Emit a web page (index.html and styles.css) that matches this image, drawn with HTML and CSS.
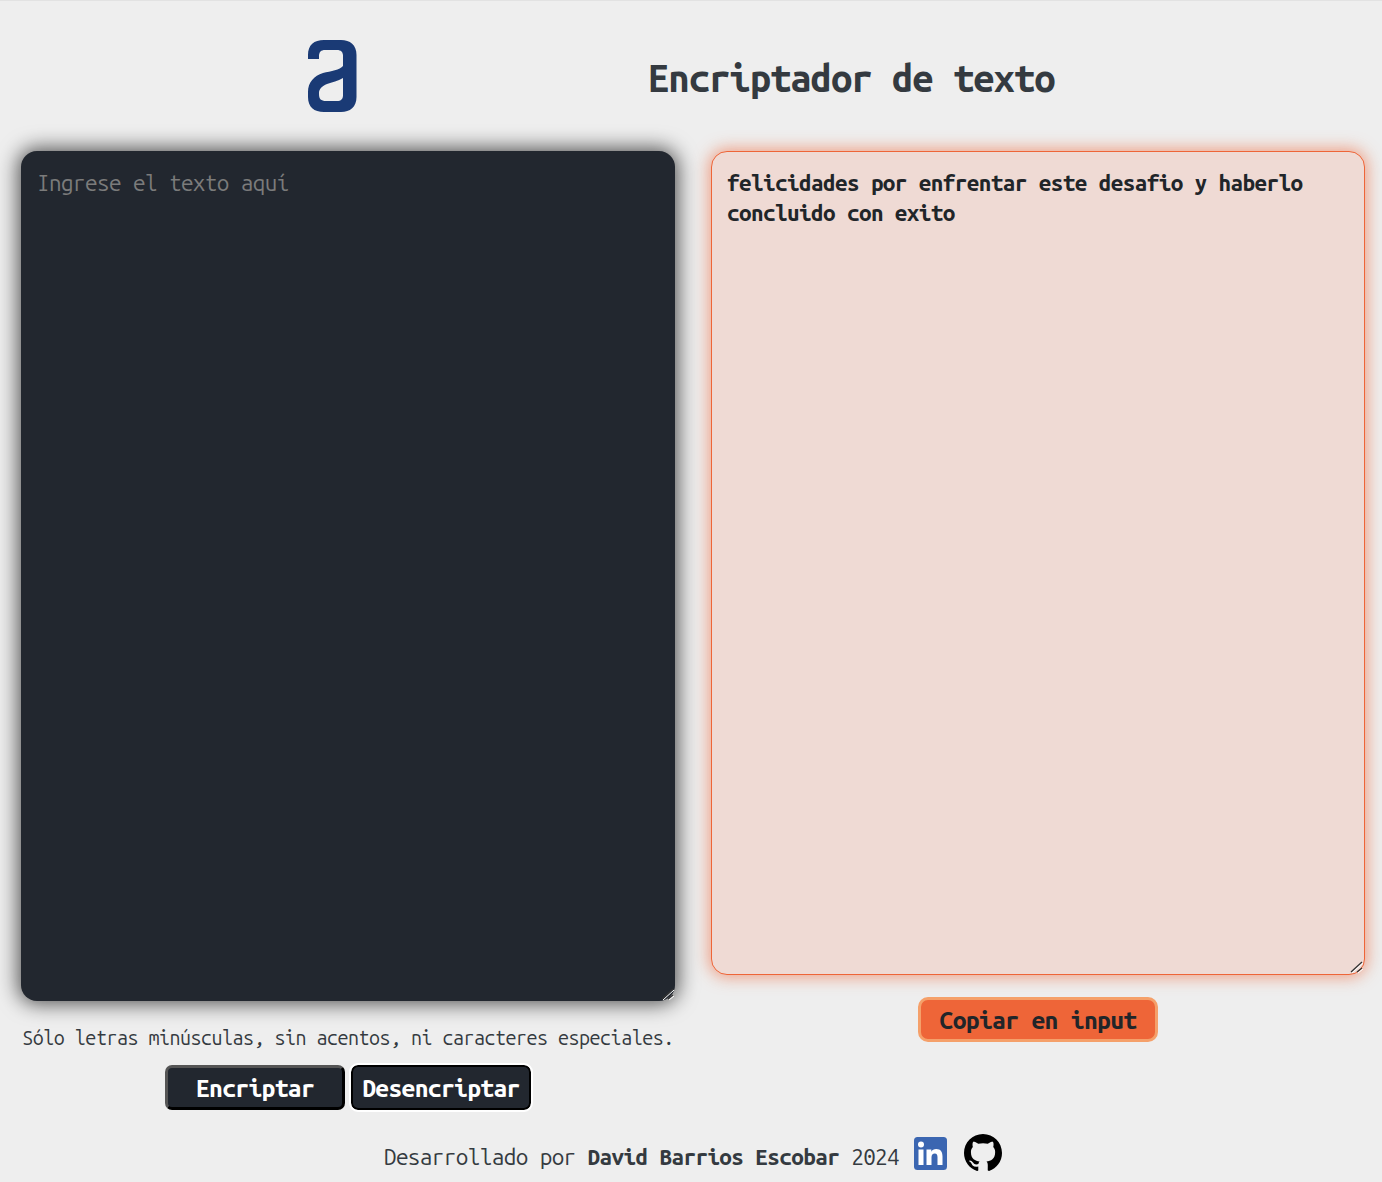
FILE: index.html
```html
<!DOCTYPE html>
<html lang="es">
<head>
<meta charset="utf-8">
<title>Encriptador de texto</title>
<link rel="stylesheet" href="styles.css">
</head>
<body>
<header class="header">
  <svg class="logo" viewBox="0 0 49 72" width="49" height="72" aria-label="Logo"><path fill-rule="evenodd" fill="#1a3a75" d="M0 19V15C0 5 6 0 16 0H33C42 0 48.500 5 48.500 15V57C48.500 67 42 72 33 72H16C6 72 0 67 0 57V52C0 42 6 36 15 33C23 31 32 30 35 26V16C35 12 33 10 29 10H17C13 10 11 12 11 16V19ZM35 38C30 41 24 42 19 44C14 46 11 49 11 53V54C11 59 13 61 18 61H29C33 61 35 59 35 55Z"/></svg>
  <h1 class="title">Encriptador de texto</h1>
</header>
<main class="columns">
  <section class="col">
    <textarea class="input" placeholder="Ingrese el texto aquí"></textarea>
    <p class="hint">Sólo letras minúsculas, sin acentos, ni caracteres especiales.</p>
    <div class="actions">
      <button class="btn">Encriptar</button>
      <button class="btn btn-active">Desencriptar</button>
    </div>
  </section>
  <section class="col">
    <textarea class="output">felicidades por enfrentar este desafio y haberlo concluido con exito</textarea>
    <button class="copy">Copiar en input</button>
  </section>
</main>
<footer class="footer">
  <span class="credit">Desarrollado por <b>David Barrios Escobar</b> 2024</span>
  <svg class="linkedin" viewBox="0 0 33 33" width="33" height="33" aria-label="LinkedIn"><rect width="33" height="33" rx="3.5" fill="#3b66b1"/><rect x="4.5" y="12.500" width="5" height="15.500" fill="#fff"/><circle cx="7" cy="7.600" r="3" fill="#fff"/><path fill="#fff" d="M12.500 12.500h4.800v2.200c.9-1.600 2.600-2.600 4.900-2.600 4.400 0 6.300 2.700 6.300 7.400V28h-5v-7.700c0-2.400-.7-3.900-2.700-3.900-2.200 0-3.300 1.500-3.300 3.900V28h-5z"/></svg>
  <svg class="github" viewBox="0 0 16 16" width="38" height="38" aria-label="GitHub"><path fill="#000" d="M8 0C3.58 0 0 3.58 0 8c0 3.54 2.29 6.53 5.47 7.59.4.07.55-.17.55-.38 0-.19-.01-.82-.01-1.490-2.010.37-2.530-.49-2.690-.94-.09-.23-.48-.94-.82-1.130-.28-.15-.68-.52-.01-.53.63-.01 1.080.58 1.230.82.720 1.210 1.870.87 2.330.66.070-.52.280-.87.510-1.070-1.780-.2-3.640-.89-3.640-3.950 0-.87.310-1.590.820-2.150-.080-.2-.360-1.020.080-2.120 0 0 .670-.21 2.200.82.640-.18 1.320-.27 2-.27.680 0 1.360.09 2 .27 1.530-1.040 2.200-.82 2.200-.82.440 1.100.160 1.920.080 2.120.510.560.820 1.270.820 2.150 0 3.070-1.870 3.750-3.650 3.950.290.250.540.730.540 1.480 0 1.070-.010 1.930-.010 2.200 0 .210.150.460.550.380A8.013 8.013 0 0016 8c0-4.420-3.580-8-8-8z"/></svg>
</footer>
</body>
</html>
```
FILE: styles.css
```css
* { box-sizing: border-box; }
html, body { height: 100%; }
body {
  margin: 0;
  height: 1182px;
  overflow: hidden;
  background: #eeeeee;
  border-top: 1px solid #e2e2e2;
  color: #343a40;
  font-family: "Ubuntu Mono", "Noto Sans Mono", "DejaVu Sans Mono", monospace;
}
.header {
  display: flex;
  align-items: flex-start;
  gap: 291px;
  padding: 39px 0 0 308px;
  height: 150px;
}
.logo { flex: none; filter: blur(.4px); }
.title {
  margin: 0;
  padding-top: 12px;
  font-size: 38.3px;
  line-height: 52px;
  letter-spacing: -1.12px;
  font-weight: 700;
  color: #343a40;
}
.columns {
  display: grid;
  grid-template-columns: 654px 654px;
  gap: 36px;
  padding: 0 17px 0 21px;
}
.col { display: flex; flex-direction: column; align-items: center; }
textarea {
  display: block;
  width: 654px;
  font: inherit;
  font-size: 22.5px;
  line-height: 30px;
  letter-spacing: -.61px;
  border-radius: 16px;
  outline: none;
}
textarea::-webkit-resizer {
  background: url("data:image/svg+xml,%3Csvg xmlns='http://www.w3.org/2000/svg' width='15' height='15'%3E%3Cpath d='M2 13L13 3M8 13L13 9' stroke='%23333' stroke-width='1.300' fill='none'/%3E%3Cpath d='M3 14L14 4M9 14L14 10' stroke='%23fff' stroke-width='1' fill='none'/%3E%3C/svg%3E") no-repeat;
}
.input {
  height: 850px;
  background: #22272f;
  border: none;
  padding: 17px 16px;
  color: #fff;
  box-shadow: 0 0 20px 3px rgba(0, 0, 0, .65);
}
.input::placeholder { color: #7b7b7b; opacity: 1; }
.output {
  height: 824px;
  background: #efdad4;
  border: 1px solid #ee6538;
  padding: 16px 15px;
  color: #212529;
  font-weight: 700;
  box-shadow: 0 0 16px 2px rgba(238, 101, 56, .6);
}
.hint {
  margin: 25px 0 0;
  font-size: 19.7px;
  line-height: 25px;
  letter-spacing: -.52px;
  color: #343a40;
  white-space: nowrap;
}
.actions { display: flex; gap: 6px; margin-top: 14px; }
button {
  font-family: inherit;
  font-weight: 700;
  font-size: 24.7px;
  letter-spacing: -.7px;
  cursor: pointer;
}
.btn {
  width: 180px;
  height: 45px;
  padding: 0;
  background: #22272f;
  color: #fff;
  border: 3px solid;
  border-color: #555 #000 #000 #555;
  border-radius: 7px;
}
.btn-active {
  border-color: #000;
  outline: 2px solid #fff;
  border-width: 2px;
}
.copy {
  margin-top: 22px;
  width: 240px;
  height: 45px;
  padding: 0;
  background: #ee6538;
  color: #212529;
  border: 3px solid #f5a06a;
  border-radius: 10px;
}
.footer {
  display: flex;
  align-items: center;
  justify-content: center;
  margin-top: 24px;
  padding-left: 4px;
  font-size: 22.5px;
  letter-spacing: -.62px;
  color: #343a40;
}
.credit { padding-top: 7px; }
.footer b { font-weight: 700; }
.linkedin { margin-left: 15px; flex: none; }
.github { margin-left: 17px; flex: none; }
```
